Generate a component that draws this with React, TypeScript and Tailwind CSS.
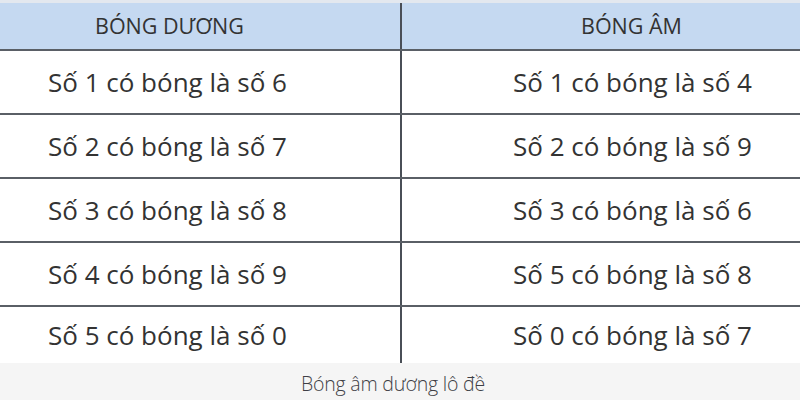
import React from "react";

const rows: [string, string][] = [
  ["Số 1 có bóng là số 6", "Số 1 có bóng là số 4"],
  ["Số 2 có bóng là số 7", "Số 2 có bóng là số 9"],
  ["Số 3 có bóng là số 8", "Số 3 có bóng là số 6"],
  ["Số 4 có bóng là số 9", "Số 5 có bóng là số 8"],
  ["Số 5 có bóng là số 0", "Số 0 có bóng là số 7"],
];

export default function App() {
  return (
    <div
      className="w-[800px] h-[400px] bg-white overflow-hidden flex flex-col text-[#333]"
      style={{ fontFamily: '"Open Sans", "Noto Sans", sans-serif' }}
    >
      <div className="h-[3px] bg-[#e3e8ef]" />
      <div className="flex h-[48px] bg-[#c5d9f1] border-b-2 border-[#5a5f66]">
        <div className="w-[400px] flex items-center pl-[95px] text-[21.5px]">
          BÓNG DƯƠNG
        </div>
        <div className="w-[2px] bg-[#4a4f57]" />
        <div className="flex-1 flex items-center pl-[179px] text-[21.5px]">
          BÓNG ÂM
        </div>
      </div>
      {rows.map(([a, b], i) => (
        <div
          key={i}
          className={`flex ${i < rows.length - 1 ? "h-[64px] border-b-2 border-[#5a5f66]" : "h-[56px]"}`}
        >
          <div className="w-[400px] flex items-center pl-[48px] text-[26px]">{a}</div>
          <div className="w-[2px] bg-[#4a4f57]" />
          <div className="flex-1 flex items-center pl-[111px] text-[26px]">{b}</div>
        </div>
      ))}
      <div className="flex-1 bg-[#f5f5f5] flex items-center justify-center pt-[4px] pr-[14px]">
        <span className="text-[19.5px] text-[#3f3f46] tracking-[-0.2px] font-light">
          Bóng âm dương lô đề
        </span>
      </div>
    </div>
  );
}
